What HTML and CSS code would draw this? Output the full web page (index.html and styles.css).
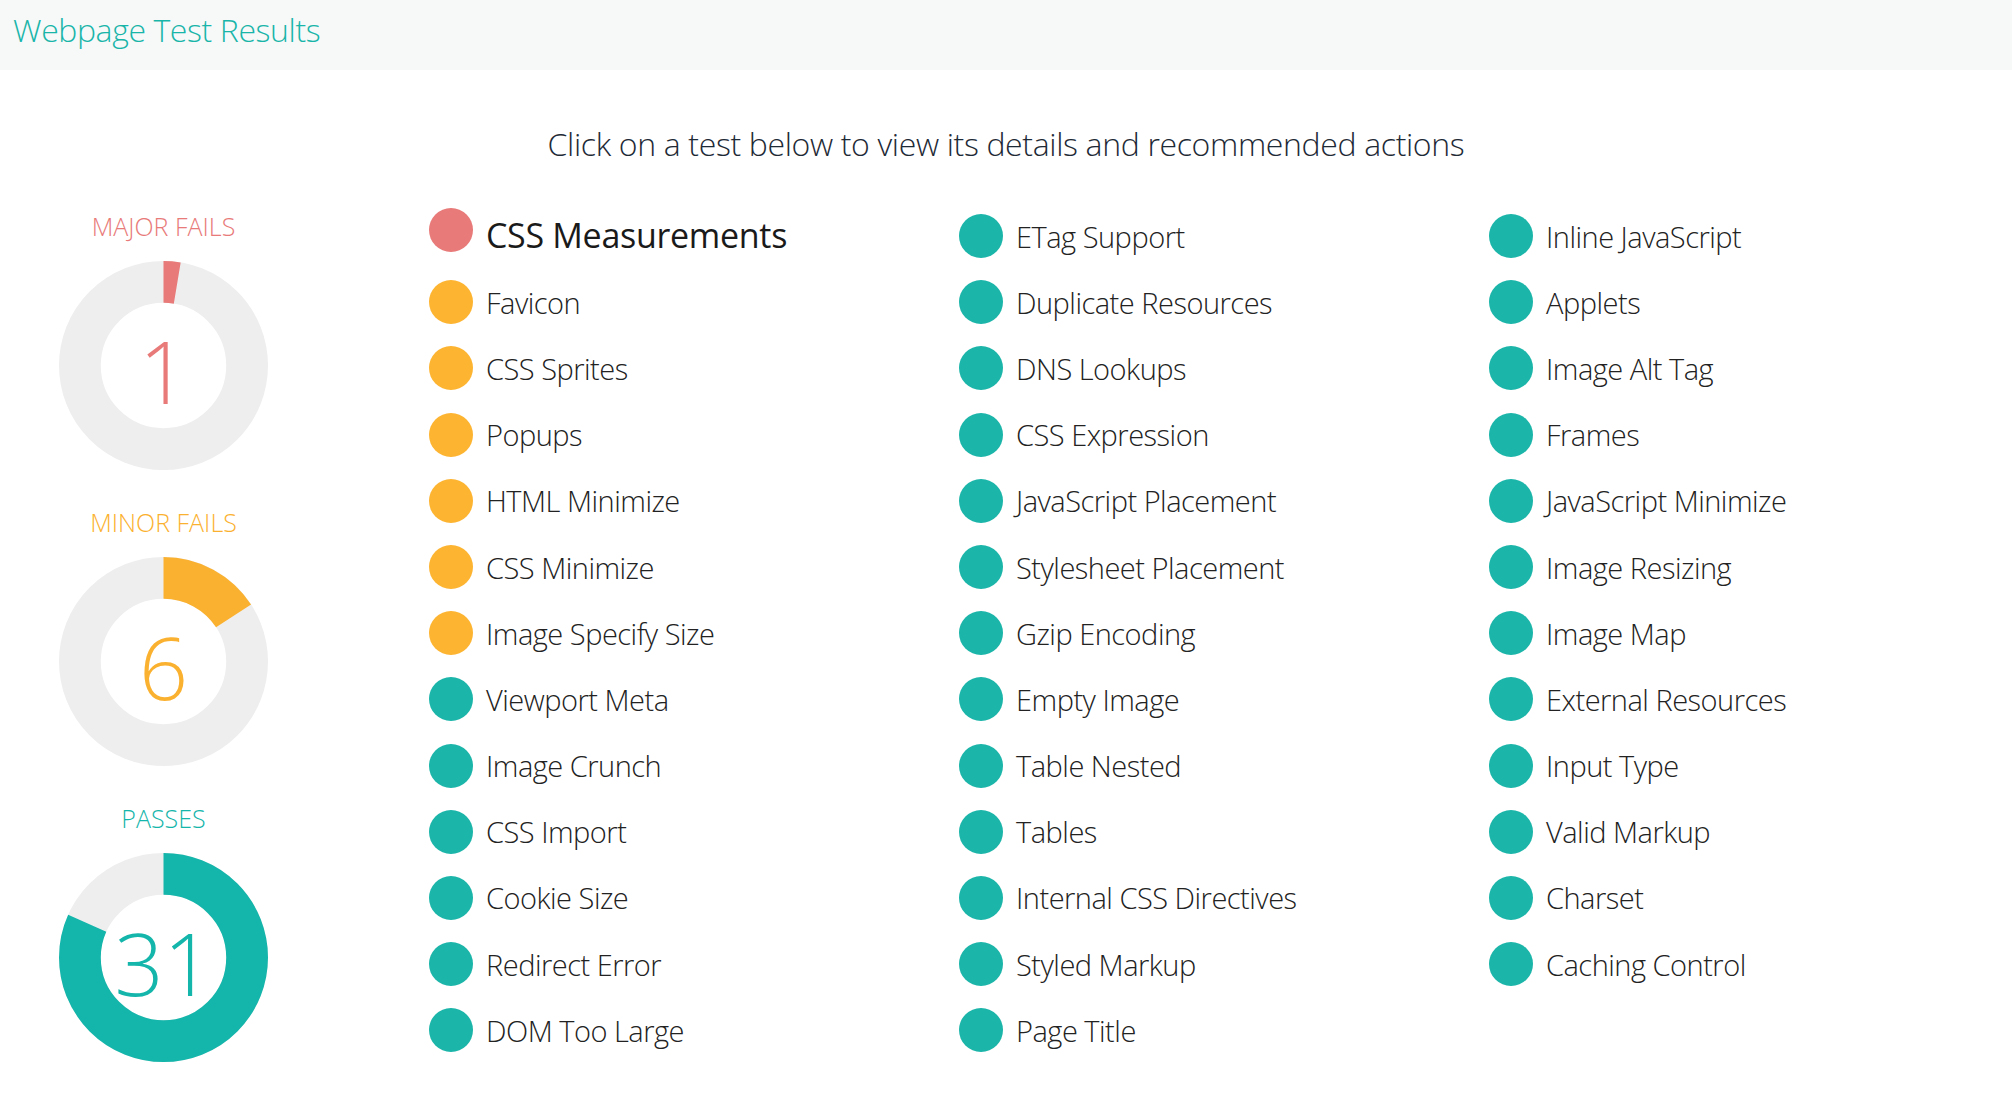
FILE: index.html
```html
<!DOCTYPE html>
<html>
<head>
<meta charset="utf-8">
<title>Webpage Test Results</title>
<link rel="stylesheet" href="styles.css">
</head>
<body>
<header class="topbar">
  <h1 class="brand">Webpage Test Results</h1>
</header>
<main class="content">
  <p class="intro">Click on a test below to view its details and recommended actions</p>
  <div class="results">
    <aside class="summary">
      <section class="stat stat-major">
        <h2 class="stat-label">MAJOR FAILS</h2>
        <div class="donut">
          <svg class="donut-svg" viewBox="0 0 210 210" width="209" height="209">
            <circle class="ring" cx="105" cy="105" r="84"/>
            <circle class="seg" cx="105" cy="105" r="84" style="stroke-dasharray: 13.89 600"/>
          </svg>
          <span class="donut-num">1</span>
        </div>
      </section>
      <section class="stat stat-minor">
        <h2 class="stat-label">MINOR FAILS</h2>
        <div class="donut">
          <svg class="donut-svg" viewBox="0 0 210 210" width="209" height="209">
            <circle class="ring" cx="105" cy="105" r="84"/>
            <circle class="seg" cx="105" cy="105" r="84" style="stroke-dasharray: 83.34 600"/>
          </svg>
          <span class="donut-num">6</span>
        </div>
      </section>
      <section class="stat stat-pass">
        <h2 class="stat-label">PASSES</h2>
        <div class="donut">
          <svg class="donut-svg" viewBox="0 0 210 210" width="209" height="209">
            <circle class="ring" cx="105" cy="105" r="84"/>
            <circle class="seg" cx="105" cy="105" r="84" style="stroke-dasharray: 430.6 600"/>
          </svg>
          <span class="donut-num">31</span>
        </div>
      </section>
    </aside>
    <div class="tests">
      <ul class="col">
        <li class="test major active"><span class="dot"></span><span class="name">CSS Measurements</span></li>
        <li class="test minor"><span class="dot"></span><span class="name">Favicon</span></li>
        <li class="test minor"><span class="dot"></span><span class="name">CSS Sprites</span></li>
        <li class="test minor"><span class="dot"></span><span class="name">Popups</span></li>
        <li class="test minor"><span class="dot"></span><span class="name">HTML Minimize</span></li>
        <li class="test minor"><span class="dot"></span><span class="name">CSS Minimize</span></li>
        <li class="test minor"><span class="dot"></span><span class="name">Image Specify Size</span></li>
        <li class="test pass"><span class="dot"></span><span class="name">Viewport Meta</span></li>
        <li class="test pass"><span class="dot"></span><span class="name">Image Crunch</span></li>
        <li class="test pass"><span class="dot"></span><span class="name">CSS Import</span></li>
        <li class="test pass"><span class="dot"></span><span class="name">Cookie Size</span></li>
        <li class="test pass"><span class="dot"></span><span class="name">Redirect Error</span></li>
        <li class="test pass"><span class="dot"></span><span class="name">DOM Too Large</span></li>
      </ul>
      <ul class="col">
        <li class="test pass"><span class="dot"></span><span class="name">ETag Support</span></li>
        <li class="test pass"><span class="dot"></span><span class="name">Duplicate Resources</span></li>
        <li class="test pass"><span class="dot"></span><span class="name">DNS Lookups</span></li>
        <li class="test pass"><span class="dot"></span><span class="name">CSS Expression</span></li>
        <li class="test pass"><span class="dot"></span><span class="name">JavaScript Placement</span></li>
        <li class="test pass"><span class="dot"></span><span class="name">Stylesheet Placement</span></li>
        <li class="test pass"><span class="dot"></span><span class="name">Gzip Encoding</span></li>
        <li class="test pass"><span class="dot"></span><span class="name">Empty Image</span></li>
        <li class="test pass"><span class="dot"></span><span class="name">Table Nested</span></li>
        <li class="test pass"><span class="dot"></span><span class="name">Tables</span></li>
        <li class="test pass"><span class="dot"></span><span class="name">Internal CSS Directives</span></li>
        <li class="test pass"><span class="dot"></span><span class="name">Styled Markup</span></li>
        <li class="test pass"><span class="dot"></span><span class="name">Page Title</span></li>
      </ul>
      <ul class="col">
        <li class="test pass"><span class="dot"></span><span class="name">Inline JavaScript</span></li>
        <li class="test pass"><span class="dot"></span><span class="name">Applets</span></li>
        <li class="test pass"><span class="dot"></span><span class="name">Image Alt Tag</span></li>
        <li class="test pass"><span class="dot"></span><span class="name">Frames</span></li>
        <li class="test pass"><span class="dot"></span><span class="name">JavaScript Minimize</span></li>
        <li class="test pass"><span class="dot"></span><span class="name">Image Resizing</span></li>
        <li class="test pass"><span class="dot"></span><span class="name">Image Map</span></li>
        <li class="test pass"><span class="dot"></span><span class="name">External Resources</span></li>
        <li class="test pass"><span class="dot"></span><span class="name">Input Type</span></li>
        <li class="test pass"><span class="dot"></span><span class="name">Valid Markup</span></li>
        <li class="test pass"><span class="dot"></span><span class="name">Charset</span></li>
        <li class="test pass"><span class="dot"></span><span class="name">Caching Control</span></li>
      </ul>
    </div>
  </div>
</main>
</body>
</html>
```

FILE: styles.css
```css
* { box-sizing: border-box; }

html, body {
  margin: 0;
  padding: 0;
  background: #ffffff;
}

body {
  font-family: "Open Sans", "Noto Sans", "Liberation Sans", sans-serif;
  font-weight: 300;
  color: #222222;
}

.topbar {
  height: 70px;
  background: #f7f9f9;
  display: flex;
  align-items: center;
  padding-left: 13px;
}

.brand {
  margin: 0;
  font-size: 32px;
  letter-spacing: -0.4px;
  font-weight: 300;
  color: #1ab5a9;
  line-height: 1;
  padding-bottom: 10px;
}

.content {
  padding-top: 52px;
}

.intro {
  margin: 0;
  text-align: center;
  font-size: 32px;
  letter-spacing: -0.35px;
  line-height: 44px;
  color: #1e2a36;
}

.results {
  display: flex;
  margin-top: 37px;
}

.summary {
  flex: none;
  width: 327px;
  display: flex;
  flex-direction: column;
  align-items: center;
  padding-top: 11px;
}

.stat {
  display: flex;
  flex-direction: column;
  align-items: center;
  margin-bottom: 40px;
}

.stat-label {
  margin: 0 0 23px;
  font-size: 25px;
  line-height: 24px;
  font-weight: 300;
}

.stat-major { color: #e87a79; }
.stat-minor { color: #fbb130; }
.stat-pass { color: #14b5aa; }

.donut {
  position: relative;
  width: 209px;
  height: 209px;
}

.donut-svg {
  display: block;
  transform: rotate(-90deg);
}

.ring {
  fill: none;
  stroke: #eeeeee;
  stroke-width: 42;
}

.seg {
  fill: none;
  stroke: currentColor;
  stroke-width: 42;
}

.donut-num {
  position: absolute;
  inset: 0;
  display: flex;
  align-items: center;
  justify-content: center;
  font-size: 86px;
  font-weight: 300;
  line-height: 1;
  padding-top: 10px;
}

.tests {
  flex: 1;
  min-width: 0;
  display: flex;
  margin-left: 102px;
}

.col {
  list-style: none;
  margin: 0;
  padding: 0;
  flex: 0 0 530px;
}

.col:last-child {
  flex: 1 1 auto;
}

.test {
  height: 66.2px;
  display: flex;
  align-items: center;
  gap: 13px;
  font-size: 29px;
  letter-spacing: -0.5px;
  color: #222222;
  cursor: pointer;
}

.dot {
  width: 44px;
  height: 44px;
  border-radius: 50%;
  flex: none;
}

.major .dot { background: #e87a79; }
.minor .dot { background: #fdb431; }
.pass .dot { background: #1bb5a9; }

.test.active {
  font-size: 34px;
  letter-spacing: -0.3px;
  font-weight: 400;
  color: #1a1a1a;
  padding-bottom: 2px;
}

.test.active .dot {
  margin-bottom: 10px;
}
```
